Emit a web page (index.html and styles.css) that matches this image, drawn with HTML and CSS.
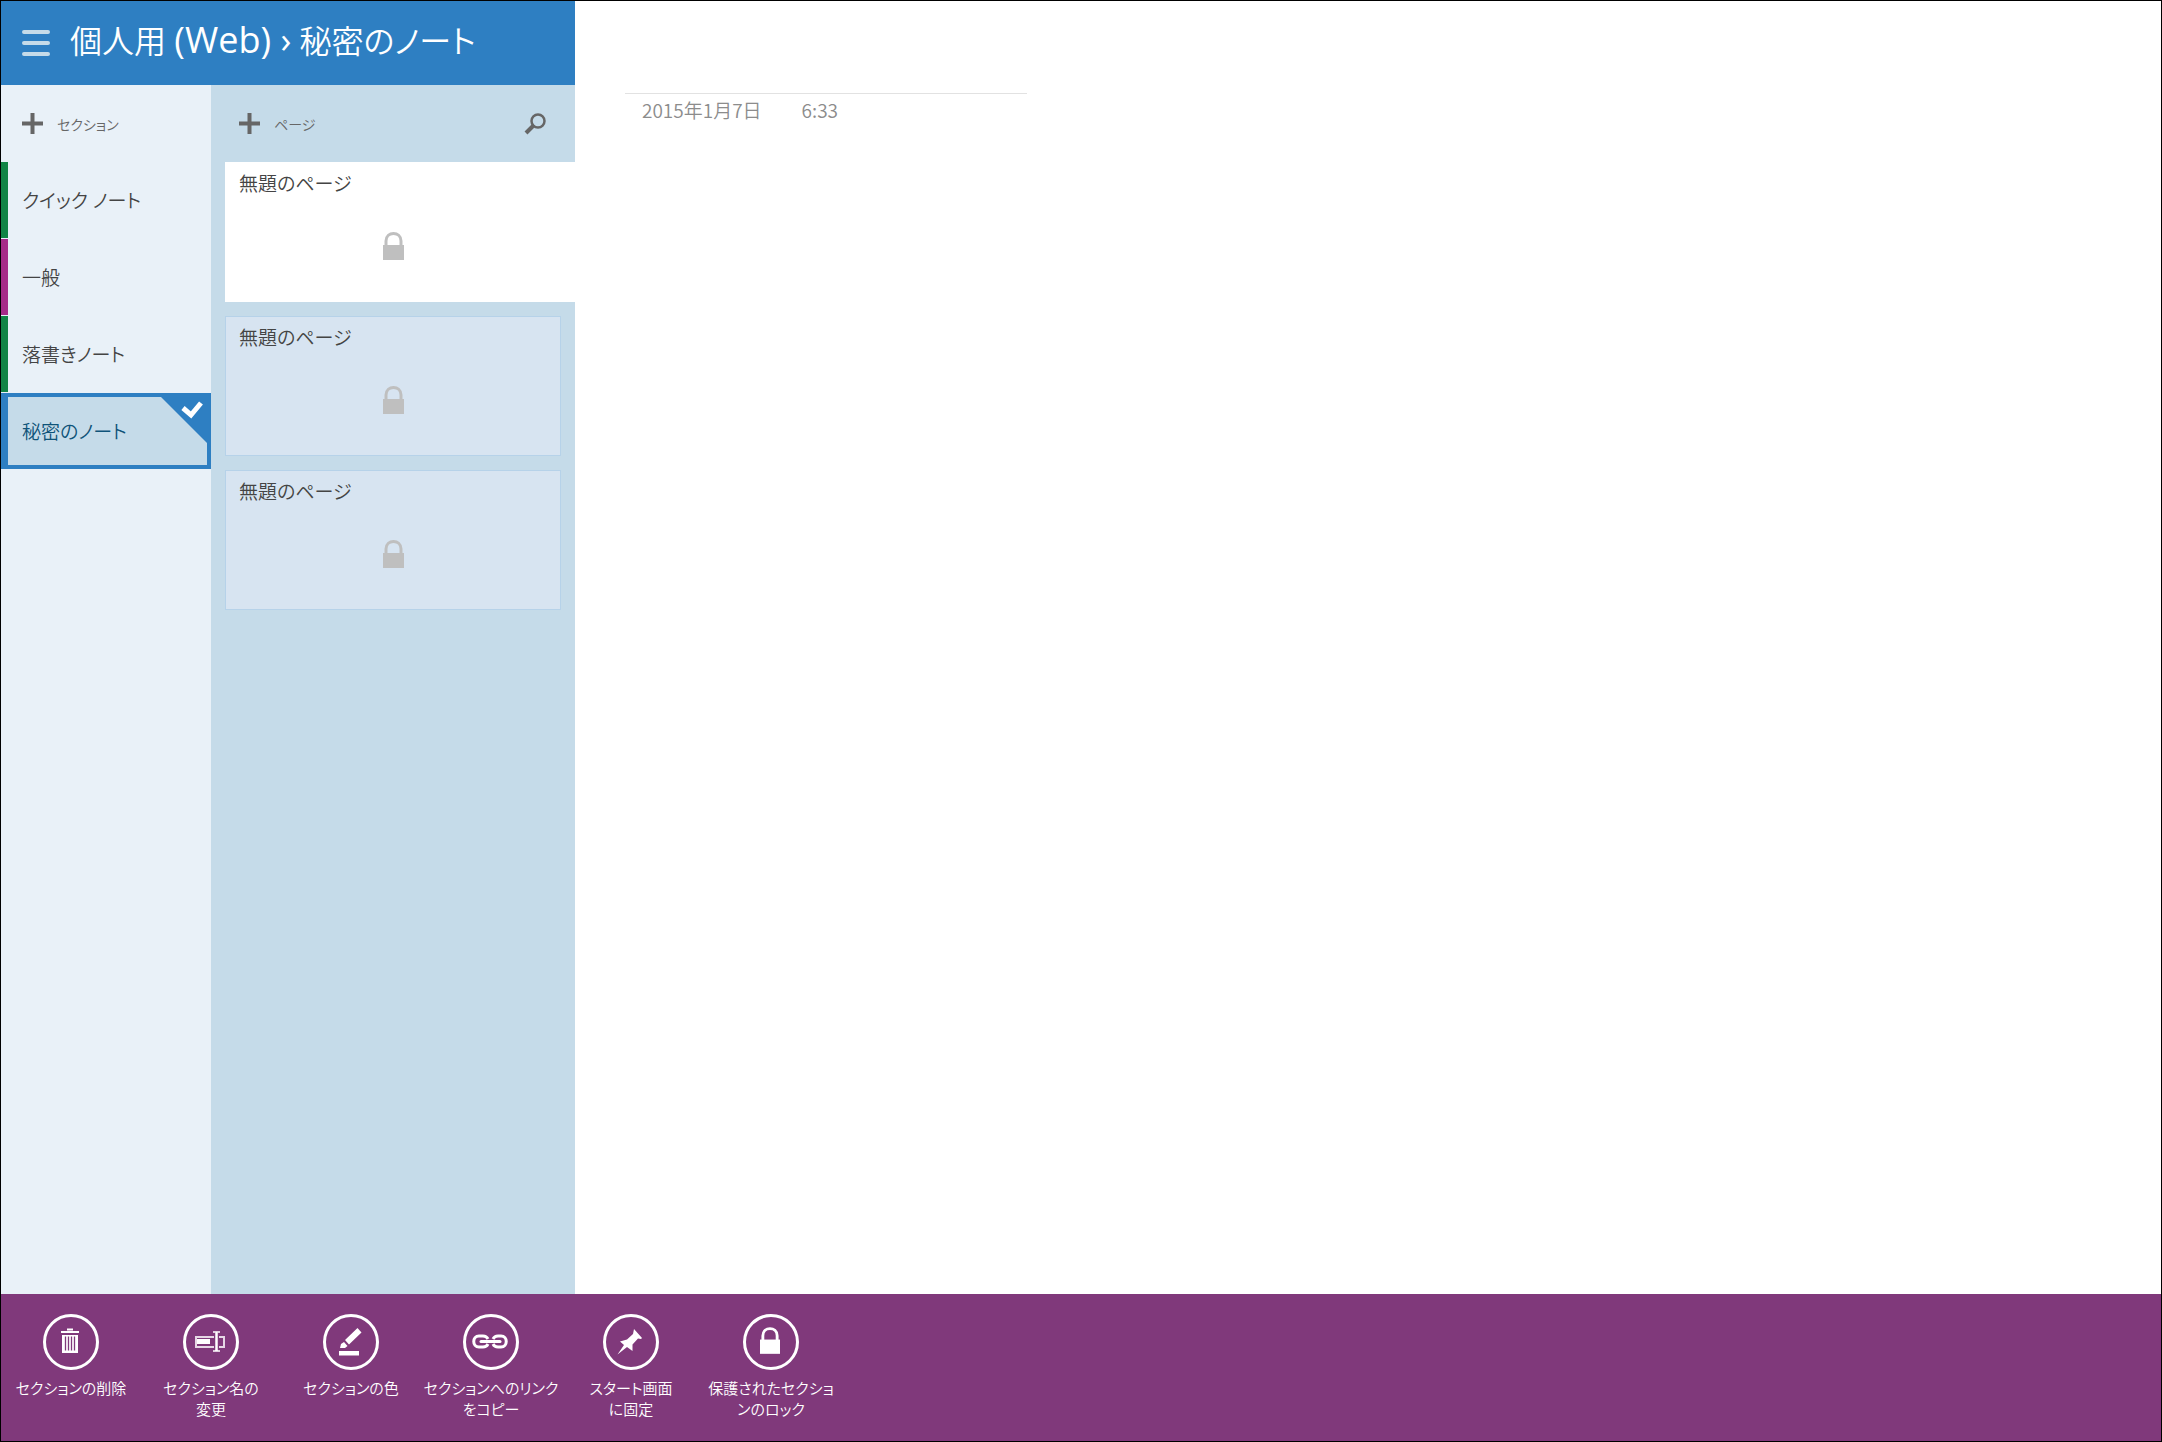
FILE: index.html
```html
<!DOCTYPE html>
<html lang="ja">
<head>
    <meta charset="UTF-8">
    <meta name="viewport" content="width=device-width, initial-scale=1.0">
    <title>秘密のノート</title>
    <link rel="stylesheet" href="styles.css">
</head>
<body>
    <svg class="sprite" aria-hidden="true">
        <symbol id="plus" viewBox="0 0 21 21">
            <path d="M0 10.5h21M10.500 0v21" stroke="currentColor" stroke-width="4" fill="none"/>
        </symbol>
        <symbol id="lock" viewBox="0 0 21 28">
            <path d="M3 14V9c0-10 15-10 15 0v5" stroke="currentColor" stroke-width="3" fill="none"/>
            <path d="M0 13h21v15H0z" fill="currentColor"/>
        </symbol>
    </svg>

    <div class="workspace">
        <div class="sidebar">
            <header class="header">
                <button class="menu-button" aria-label="メニュー">
                    <svg width="28" height="28" viewBox="0 0 28 28">
                        <path d="M2 3h24M2 14h24M2 25h24" stroke="currentColor" stroke-width="4" stroke-linecap="round"/>
                    </svg>
                </button>
                <h1>個人用 <span class="latin">(Web) ›</span> 秘密のノート</h1>
            </header>
            <div class="columns">
                <nav class="sections">
                    <div class="column-head">
                        <button class="add-button">
                            <svg width="21" height="21"><use href="#plus"/></svg>
                            <span>セクション</span>
                        </button>
                    </div>
                    <button class="section green">クイック ノート</button>
                    <button class="section magenta">一般</button>
                    <button class="section green">落書きノート</button>
                    <button class="section selected">
                        秘密のノート
                        <svg class="check" width="54" height="54" viewBox="0 0 54 54">
                            <path d="M0 0h54v54z" fill="#2e7fc2"/>
                            <path d="M26 15l8 7L44 10" stroke="#fff" stroke-width="5" fill="none"/>
                        </svg>
                    </button>
                </nav>
                <div class="pages">
                    <div class="column-head">
                        <button class="add-button">
                            <svg width="21" height="21"><use href="#plus"/></svg>
                            <span>ページ</span>
                        </button>
                        <button class="search-button" aria-label="検索">
                            <svg width="22" height="22" viewBox="0 0 22 22">
                                <circle cx="14" cy="8" r="6.500" stroke="currentColor" stroke-width="2.500" fill="none"/>
                                <path d="M10 12l-8 8" stroke="currentColor" stroke-width="4"/>
                            </svg>
                        </button>
                    </div>
                    <div class="page-list">
                        <button class="page current">
                            <span>無題のページ</span>
                            <svg width="21" height="28"><use href="#lock"/></svg>
                        </button>
                        <button class="page">
                            <span>無題のページ</span>
                            <svg width="21" height="28"><use href="#lock"/></svg>
                        </button>
                        <button class="page">
                            <span>無題のページ</span>
                            <svg width="21" height="28"><use href="#lock"/></svg>
                        </button>
                    </div>
                </div>
            </div>
        </div>
        <main class="note">
            <div class="note-date">
                <span>2015年1月7日</span>
                <span>6:33</span>
            </div>
        </main>
    </div>

    <footer class="app-bar">
        <button class="command">
            <span class="circle">
                <svg width="56" height="56" viewBox="0 0 56 56">
                    <path d="M18 18h18M24 15.500h6" stroke="#fff" stroke-width="2"/>
                    <path d="M19 21h16v18H19z" fill="#fff"/>
                    <path d="M22.500 22.500v14M25.500 22.500v14M28.500 22.500v14M31.500 22.500v14" stroke="#80397b" stroke-width="1.300"/>
                </svg>
            </span>
            <span>セクションの削除</span>
        </button>
        <button class="command">
            <span class="circle">
                <svg width="56" height="56" viewBox="0 0 56 56">
                    <path d="M31 23H13v10h18M36 23h5v10h-5" stroke="#e6d7e5" stroke-width="2" fill="none"/>
                    <path d="M14 25h13v5H14z" fill="#fff"/>
                    <path d="M33.500 19v18" stroke="#fff" stroke-width="2.500"/>
                    <path d="M30 18h3l.5 1 .5-1h3M30 37h3l.5-1 .5 1h3" stroke="#fff" stroke-width="1.500" fill="none"/>
                </svg>
            </span>
            <span>セクション名の<br>変更</span>
        </button>
        <button class="command">
            <span class="circle">
                <svg width="56" height="56" viewBox="0 0 56 56">
                    <path d="M16 37h20v4.500H16z" fill="#fff"/>
                    <path d="M34.500 14l4 4.500L26 30.500l-4-4.500zM21 28l3.500 4L22 34h-5l1-4z" fill="#fff"/>
                </svg>
            </span>
            <span>セクションの色</span>
        </button>
        <button class="command">
            <span class="circle">
                <svg width="56" height="56" viewBox="0 0 56 56">
                    <path d="M25 25c-1-2-3-3-5-3h-4c-7 0-7 11 0 11h4c2 0 4-1 5-3M30 25c1-2 3-3 5-3h3c7 0 7 11 0 11h-3c-2 0-4-1-5-3" stroke="#fff" stroke-width="3" fill="none"/>
                    <path d="M18 27.500h19" stroke="#fff" stroke-width="3" stroke-linecap="round"/>
                </svg>
            </span>
            <span>セクションへのリンク<br>をコピー</span>
        </button>
        <button class="command">
            <span class="circle">
                <svg width="56" height="56" viewBox="0 0 56 56">
                    <path d="M31 15l8 9-1 1-3-.5-5.500 6L29.500 37 24 33l-9.500 7.500L21 31l-4-3.500 7-2 6-5.500z" fill="#fff"/>
                </svg>
            </span>
            <span>スタート画面<br>に固定</span>
        </button>
        <button class="command">
            <span class="circle">
                <svg width="56" height="56" viewBox="0 0 56 56">
                    <use href="#lock" x="17" y="13" width="20" height="27"/>
                </svg>
            </span>
            <span>保護されたセクショ<br>ンのロック</span>
        </button>
    </footer>
</body>
</html>
```
FILE: styles.css
```css
* {
    box-sizing: border-box;
}
body {
    margin: 0;
    min-height: 100vh;
    display: flex;
    flex-direction: column;
    border: 1px solid #000;
    background: #fff;
    color: #444;
    font-family: "Open Sans", "Noto Sans CJK JP", sans-serif;
    font-size: 19px;
    font-weight: 350;
    font-feature-settings: "palt";
}
button {
    margin: 0;
    padding: 0;
    border: 0;
    background: none;
    color: inherit;
    font: inherit;
    font-feature-settings: inherit;
    text-align: left;
    cursor: pointer;
}
svg {
    display: block;
    flex: none;
}
.sprite {
    position: absolute;
    width: 0;
    height: 0;
}
.workspace {
    flex: 1;
    display: flex;
}
.sidebar {
    width: 574px;
    flex: none;
    display: flex;
    flex-direction: column;
}

/* header */
.header {
    height: 84px;
    display: flex;
    align-items: center;
    gap: 20px;
    padding: 0 21px;
    background: #2e7fc2;
    color: #fff;
}
.menu-button {
    color: #c5dbe9;
}
.header h1 {
    margin: 0;
    padding-bottom: 5px;
    font-size: 32px;
    font-weight: 350;
    line-height: 40px;
    white-space: nowrap;
}
.latin {
    font-size: 36px;
    font-weight: 400;
}

/* columns */
.columns {
    flex: 1;
    display: flex;
}
.column-head {
    height: 77px;
    flex: none;
    display: flex;
    align-items: center;
    justify-content: space-between;
    color: #666;
    font-size: 14px;
}
.add-button {
    display: flex;
    align-items: center;
    gap: 14px;
}
.sections {
    width: 210px;
    display: flex;
    flex-direction: column;
    background: #e9f1f8;
}
.sections .column-head {
    padding: 0 21px;
}
.section {
    position: relative;
    height: 76px;
    margin-bottom: 1px;
    padding-left: 14px;
    border-left: 7px solid;
}
.green {
    border-left-color: #118445;
}
.magenta {
    border-left-color: #a62b88;
}
.section.selected {
    border: 4px solid #2e7fc2;
    border-left-width: 7px;
    background: #c5dbe9;
    color: #0f5379;
}
.check {
    position: absolute;
    top: -4px;
    right: -4px;
}
.pages {
    flex: 1;
    background: #c5dbe9;
}
.pages .column-head {
    padding: 0 29px 0 28px;
}
.page-list {
    display: flex;
    flex-direction: column;
    gap: 14px;
    padding-left: 14px;
}
.page {
    height: 140px;
    margin-right: 14px;
    padding: 5px 13px;
    display: flex;
    flex-direction: column;
    gap: 32px;
    border: 1px solid #b6d2e9;
    background: #d7e4f1;
    line-height: 32px;
}
.page.current {
    margin-right: 0;
    padding-right: 27px;
    border-color: #fff;
    background: #fff;
}
.page svg {
    align-self: center;
    color: #bfbfbf;
}

/* note */
.note {
    flex: 1;
    padding: 92px 50px;
}
.note-date {
    width: 402px;
    display: flex;
    gap: 40px;
    padding: 4px 17px;
    border-top: 1px solid #e2e2e2;
    color: #8c8c8c;
    font-family: "Noto Sans CJK JP", sans-serif;
    font-size: 19px;
    line-height: 24px;
}

/* bottom bar */
.app-bar {
    height: 147px;
    display: flex;
    align-items: flex-start;
    padding-top: 20px;
    background: #80397b;
    color: #fff;
}
.command {
    width: 140px;
    display: flex;
    flex-direction: column;
    align-items: center;
    gap: 8px;
    font-size: 15px;
    line-height: 21px;
    text-align: center;
    white-space: nowrap;
}
.circle {
    width: 56px;
    height: 56px;
    display: flex;
    align-items: center;
    justify-content: center;
    border: 3px solid #fff;
    border-radius: 50%;
}
```
